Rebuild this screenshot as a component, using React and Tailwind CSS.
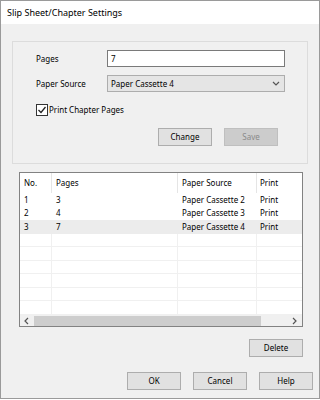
const font = { fontFamily: '"Noto Sans", "Open Sans", sans-serif' }

function Btn({ children, disabled, className = '' }) {
  return (
    <div
      className={
        'w-[54px] h-[18px] flex items-center justify-center border text-[8px] leading-none ' +
        (disabled
          ? 'bg-[#cccccc] border-[#bfbfbf] text-[#8a8a8a] '
          : 'bg-[#e1e1e1] border-[#adadad] text-black ') +
        className
      }
    >
      {children}
    </div>
  )
}

function Chevron({ dir = 'down', className = '' }) {
  const pts = {
    down: '1,2 4,5 7,2',
    left: '5,1 2,4 5,7',
    right: '2,1 5,4 2,7',
  }[dir]
  return (
    <svg width="8" height="8" viewBox="0 0 8 8" className={className}>
      <polyline points={pts} fill="none" stroke="#555" strokeWidth="1.2" />
    </svg>
  )
}

const rows = [
  { no: '1', pages: '3', src: 'Paper Cassette 2', print: 'Print' },
  { no: '2', pages: '4', src: 'Paper Cassette 3', print: 'Print' },
  { no: '3', pages: '7', src: 'Paper Cassette 4', print: 'Print', sel: true },
]

const cols = 'grid grid-cols-[32px_126px_79px_44px]'

export default function App() {
  return (
    <div
      className="w-[320px] h-[399px] bg-[#f0f0f0] border border-[#9a9a9a] flex flex-col text-black"
      style={font}
    >
      <div className="h-[23px] bg-white flex items-center pl-[6px] text-[9px] shrink-0">
        Slip Sheet/Chapter Settings
      </div>

      <div className="ml-[11px] mt-[17px] w-[296px] h-[123px] border border-[#dcdcdc] flex flex-col pl-[23px] pt-[8px] text-[8px]">
        <div className="flex items-center h-[17px]">
          <span className="w-[71px]">Pages</span>
          <div className="w-[178px] h-[17px] bg-white border border-[#7a7a7a] flex items-center pl-[3px]">7</div>
        </div>
        <div className="flex items-center h-[17px] mt-[8px]">
          <span className="w-[71px]">Paper Source</span>
          <div className="w-[178px] h-[17px] bg-[#e5e5e5] border border-[#adadad] flex items-center justify-between pl-[3px] pr-[4px]">
            <span>Paper Cassette 4</span>
            <Chevron />
          </div>
        </div>
        <div className="flex items-center mt-[12px] h-[12px]">
          <div className="w-[12px] h-[12px] bg-white border border-[#333] flex items-center justify-center">
            <svg width="10" height="10" viewBox="0 0 10 10">
              <polyline points="1.5,5 4,7.5 8.5,2" fill="none" stroke="#222" strokeWidth="1.3" />
            </svg>
          </div>
          <span className="ml-[1px]">Print Chapter Pages</span>
        </div>
        <div className="flex mt-[12px] ml-[122px] gap-[12px]">
          <Btn>Change</Btn>
          <Btn disabled>Save</Btn>
        </div>
      </div>

      <div className="ml-[18px] mt-[8px] w-[284px] h-[155px] bg-white border border-[#828282] flex flex-col text-[8px] overflow-hidden">
        <div className={cols + ' h-[20px] shrink-0'}>
          <div className="pl-[4px] flex items-center border-r border-[#e5e5e5]">No.</div>
          <div className="pl-[4px] flex items-center border-r border-[#e5e5e5]">Pages</div>
          <div className="pl-[4px] flex items-center border-r border-[#e5e5e5]">Paper Source</div>
          <div className="pl-[3px] flex items-center">Print</div>
        </div>
        {rows.map((r) => (
          <div key={r.no} className={cols + ' h-[13.5px] shrink-0 ' + (r.sel ? 'bg-[#ececec]' : '')}>
            <div className="pl-[4px] flex items-center">{r.no}</div>
            <div className="pl-[4px] flex items-center">{r.pages}</div>
            <div className="pl-[4px] flex items-center">{r.src}</div>
            <div className="pl-[3px] flex items-center">{r.print}</div>
          </div>
        ))}
        {[0, 1, 2, 3, 4, 5].map((i) => (
          <div key={i} className={cols + ' h-[13.5px] shrink-0 border-b border-[#f0f0f0]'}>
            <div className="border-r border-[#f0f0f0]" />
            <div className="border-r border-[#f0f0f0]" />
            <div className="border-r border-[#f0f0f0]" />
            <div />
          </div>
        ))}
        <div className="flex-1" />
        <div className="h-[13px] bg-[#f0f0f0] flex items-center shrink-0">
          <div className="w-[14px] flex justify-center"><Chevron dir="left" /></div>
          <div className="w-[227px] h-[11px] bg-[#cdcdcd]" />
          <div className="flex-1" />
          <div className="w-[14px] flex justify-center"><Chevron dir="right" /></div>
        </div>
      </div>

      <div className="flex justify-end mr-[16px] mt-[12px]">
        <Btn>Delete</Btn>
      </div>

      <div className="flex justify-end gap-[12px] mr-[6px] mt-[15px]">
        <Btn>OK</Btn>
        <Btn>Cancel</Btn>
        <Btn>Help</Btn>
      </div>
    </div>
  )
}
